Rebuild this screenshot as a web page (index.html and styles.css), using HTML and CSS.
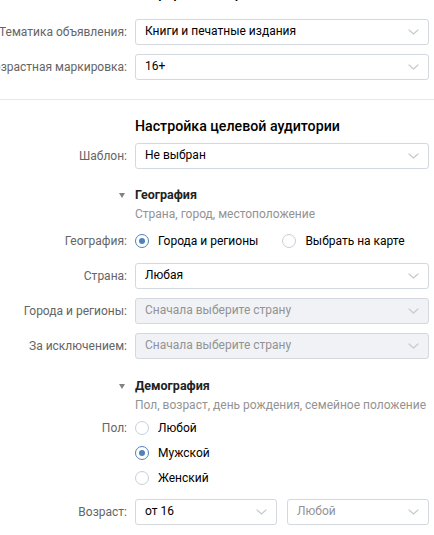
FILE: index.html
```html
<!DOCTYPE html>
<html lang="ru">
<head>
<meta charset="utf-8">
<title>Настройка целевой аудитории</title>
<link rel="stylesheet" href="styles.css">
</head>
<body>
<div class="page">
  <div class="cut-title">Оформление рекламной записи</div>

  <div class="section first">
    <div class="row">
      <div class="label">Тематика объявления:</div>
      <div class="select"><span>Книги и печатные издания</span><svg class="chev" width="11" height="6" viewBox="0 0 11 6"><path d="M1 1l4.5 4 4.5-4" fill="none" stroke="#c5cbd1" stroke-width="1.2" stroke-linecap="round" stroke-linejoin="round"/></svg></div>
    </div>
    <div class="row">
      <div class="label">Возрастная маркировка:</div>
      <div class="select"><span>16+</span><svg class="chev" width="11" height="6" viewBox="0 0 11 6"><path d="M1 1l4.5 4 4.5-4" fill="none" stroke="#c5cbd1" stroke-width="1.2" stroke-linecap="round" stroke-linejoin="round"/></svg></div>
    </div>
  </div>

  <div class="divider"></div>

  <div class="row heading-row">
    <div class="label"></div>
    <div class="heading">Настройка целевой аудитории</div>
  </div>
  <div class="row template-row">
    <div class="label">Шаблон:</div>
    <div class="select"><span>Не выбран</span><svg class="chev" width="11" height="6" viewBox="0 0 11 6"><path d="M1 1l4.5 4 4.5-4" fill="none" stroke="#c5cbd1" stroke-width="1.2" stroke-linecap="round" stroke-linejoin="round"/></svg></div>
  </div>

  <div class="row group-head geo-head">
    <div class="label"><span class="tri"></span></div>
    <div class="group-text">
      <div class="group-title">География</div>
      <div class="group-sub">Страна, город, местоположение</div>
    </div>
  </div>

  <div class="row radio-row geo-radios">
    <div class="label">География:</div>
    <div class="radios-inline">
      <div class="radio checked"><span class="circle"></span><span>Города и регионы</span></div>
      <div class="radio"><span class="circle"></span><span>Выбрать на карте</span></div>
    </div>
  </div>

  <div class="section geo-selects">
    <div class="row">
      <div class="label">Страна:</div>
      <div class="select"><span>Любая</span><svg class="chev" width="11" height="6" viewBox="0 0 11 6"><path d="M1 1l4.5 4 4.5-4" fill="none" stroke="#c5cbd1" stroke-width="1.2" stroke-linecap="round" stroke-linejoin="round"/></svg></div>
    </div>
    <div class="row">
      <div class="label">Города и регионы:</div>
      <div class="select disabled"><span>Сначала выберите страну</span><svg class="chev" width="11" height="6" viewBox="0 0 11 6"><path d="M1 1l4.5 4 4.5-4" fill="none" stroke="#c5cbd1" stroke-width="1.2" stroke-linecap="round" stroke-linejoin="round"/></svg></div>
    </div>
    <div class="row">
      <div class="label">За исключением:</div>
      <div class="select disabled"><span>Сначала выберите страну</span><svg class="chev" width="11" height="6" viewBox="0 0 11 6"><path d="M1 1l4.5 4 4.5-4" fill="none" stroke="#c5cbd1" stroke-width="1.2" stroke-linecap="round" stroke-linejoin="round"/></svg></div>
    </div>
  </div>

  <div class="row group-head demo-head">
    <div class="label"><span class="tri"></span></div>
    <div class="group-text">
      <div class="group-title">Демография</div>
      <div class="group-sub">Пол, возраст, день рождения, семейное положение</div>
    </div>
  </div>

  <div class="row sex-row">
    <div class="label">Пол:</div>
    <div class="radios-col">
      <div class="radio"><span class="circle"></span><span>Любой</span></div>
      <div class="radio checked"><span class="circle"></span><span>Мужской</span></div>
      <div class="radio"><span class="circle"></span><span>Женский</span></div>
    </div>
  </div>

  <div class="row age-row">
    <div class="label">Возраст:</div>
    <div class="age-pair">
      <div class="select"><span>от 16</span><svg class="chev" width="11" height="6" viewBox="0 0 11 6"><path d="M1 1l4.5 4 4.5-4" fill="none" stroke="#c5cbd1" stroke-width="1.2" stroke-linecap="round" stroke-linejoin="round"/></svg></div>
      <div class="select placeholder"><span>Любой</span><svg class="chev" width="11" height="6" viewBox="0 0 11 6"><path d="M1 1l4.5 4 4.5-4" fill="none" stroke="#c5cbd1" stroke-width="1.2" stroke-linecap="round" stroke-linejoin="round"/></svg></div>
    </div>
  </div>
</div>
</body>
</html>
```

FILE: styles.css
```css
* { box-sizing: border-box; }

html, body {
  margin: 0;
  padding: 0;
  background: #ffffff;
}

body {
  font-family: Roboto, "Noto Sans", "DejaVu Sans", sans-serif;
  font-size: 12px;
  color: #000000;
  overflow: hidden;
}

.page {
  width: 434px;
  height: 535px;
  overflow: hidden;
}

.cut-title {
  margin-top: -16px;
  height: 18px;
  line-height: 18px;
  padding-left: 145px;
  font-size: 14.2px;
  font-weight: 500;
  white-space: nowrap;
}

.section.first {
  padding-top: 17px;
}

.row {
  display: flex;
  align-items: center;
  gap: 8px;
}

.section .row + .row {
  margin-top: 9px;
}

.label {
  width: 127px;
  flex: none;
  display: flex;
  justify-content: flex-end;
  white-space: nowrap;
  color: #656565;
  line-height: 18px;
}

.select {
  width: 294px;
  height: 26px;
  flex: none;
  border: 1px solid #d3d9de;
  border-radius: 3px;
  background: #ffffff;
  padding: 0 9px 0 9px;
  display: flex;
  align-items: center;
  justify-content: space-between;
  white-space: nowrap;
  color: #000000;
}

.select span {
  padding-bottom: 2px;
}

.select.disabled {
  background: #f0f2f5;
  color: #939393;
}

.select.placeholder {
  color: #939393;
}

.chev {
  flex: none;
  margin-right: 0;
}

.divider {
  margin-top: 19px;
  height: 1px;
  background: #e7e8ec;
}

.heading-row {
  margin-top: 16px;
}

.heading {
  font-size: 14.2px;
  font-weight: 500;
  line-height: 20px;
  color: #000000;
}

.template-row {
  margin-top: 7px;
}

.group-head {
  align-items: flex-start;
}

.geo-head {
  margin-top: 17px;
}

.demo-head {
  margin-top: 18px;
}

.group-head .label {
  padding-right: 2px;
  height: 18px;
  align-items: center;
}

.tri {
  width: 0;
  height: 0;
  border-left: 3px solid transparent;
  border-right: 3px solid transparent;
  border-top: 5px solid #828282;
}

.group-title {
  font-weight: 700;
  font-size: 12.5px;
  line-height: 18px;
  color: #222222;
}

.group-sub {
  margin-top: 1px;
  line-height: 18px;
  color: #939393;
}

.geo-radios {
  margin-top: 9px;
}

.radios-inline {
  display: flex;
  gap: 24px;
}

.radio {
  display: flex;
  align-items: center;
  gap: 9px;
  line-height: 18px;
  white-space: nowrap;
}

.circle {
  width: 14px;
  height: 14px;
  flex: none;
  border: 1px solid #c5d0db;
  border-radius: 50%;
  background: #ffffff;
  display: flex;
  align-items: center;
  justify-content: center;
}

.radio.checked .circle {
  border-color: #5181b8;
}

.radio.checked .circle::after {
  content: "";
  width: 6px;
  height: 6px;
  border-radius: 50%;
  background: #5181b8;
}

.geo-selects {
  margin-top: 13px;
}

.sex-row {
  margin-top: 5px;
  align-items: flex-start;
}

.radios-col {
  display: flex;
  flex-direction: column;
  gap: 7px;
}

.age-row {
  margin-top: 12px;
}

.age-pair {
  display: flex;
  gap: 10px;
}

.age-pair .select {
  width: 142px;
}
```
